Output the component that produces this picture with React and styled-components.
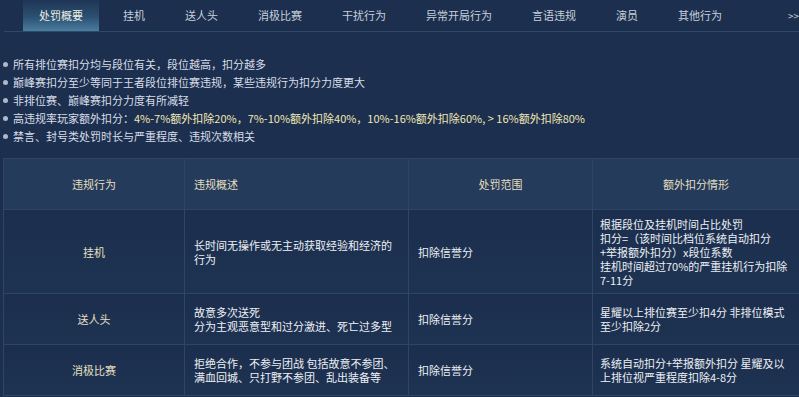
import React from 'react';
import styled, { createGlobalStyle } from 'styled-components';

const GlobalStyle = createGlobalStyle`
  html, body {
    margin: 0;
    padding: 0;
    background: #1c2f4e;
    font-family: "Noto Sans CJK SC", "Noto Sans", sans-serif;
  }
`;

const tabs = ['处罚概要', '挂机', '送人头', '消极比赛', '干扰行为', '异常开局行为', '言语违规', '演员', '其他行为'];

const notes = [
  { text: '所有排位赛扣分均与段位有关，段位越高，扣分越多' },
  { text: '巅峰赛扣分至少等同于王者段位排位赛违规，某些违规行为扣分力度更大' },
  { text: '非排位赛、巅峰赛扣分力度有所减轻' },
  {
    text: '高违规率玩家额外扣分：',
    mark: '4%-7%额外扣除20%，7%-10%额外扣除40%，10%-16%额外扣除60%, > 16%额外扣除80%'
  },
  { text: '禁言、封号类处罚时长与严重程度、违规次数相关' }
];

const rows = [
  {
    name: '挂机',
    desc: ['长时间无操作或无主动获取经验和经济的', '行为'],
    scope: '扣除信誉分',
    extra: ['根据段位及挂机时间占比处罚', '扣分=（该时间比档位系统自动扣分', '+举报额外扣分）x段位系数', '挂机时间超过70%的严重挂机行为扣除', '7-11分'],
    height: 84
  },
  {
    name: '送人头',
    desc: ['故意多次送死', '分为主观恶意型和过分激进、死亡过多型'],
    scope: '扣除信誉分',
    extra: ['星耀以上排位赛至少扣4分 非排位模式', '至少扣除2分'],
    height: 51
  },
  {
    name: '消极比赛',
    desc: ['拒绝合作，不参与团战 包括故意不参团、', '满血回城、只打野不参团、乱出装备等'],
    scope: '扣除信誉分',
    extra: ['系统自动扣分+举报额外扣分 星耀及以', '上排位视严重程度扣除4-8分'],
    height: 51
  }
];

function App() {
  return (
    <Page>
      <GlobalStyle />
      <TabBar>
        {tabs.map((t, i) => (
          <Tab key={t} $active={i === 0}>{t}</Tab>
        ))}
        <More>&gt;&gt;</More>
      </TabBar>

      <NoteList>
        {notes.map((n) => (
          <Note key={n.text}>
            {n.text}
            {n.mark && <Mark>{n.mark}</Mark>}
          </Note>
        ))}
      </NoteList>

      <Table>
        <colgroup>
          <col style={{ width: 181 }} />
          <col style={{ width: 224 }} />
          <col style={{ width: 184 }} />
          <col style={{ width: 207 }} />
        </colgroup>
        <thead>
          <tr>
            <Th $align="center">违规行为</Th>
            <Th>违规概述</Th>
            <Th $align="center">处罚范围</Th>
            <Th $align="center">额外扣分情形</Th>
          </tr>
        </thead>
        <tbody>
          {rows.map((r) => (
            <Row key={r.name} $h={r.height}>
              <NameCell>{r.name}</NameCell>
              <Td>{r.desc.map((l) => <Line key={l}>{l}</Line>)}</Td>
              <Td>{r.scope}</Td>
              <Td $pad={7}>{r.extra.map((l) => <Line key={l}>{l}</Line>)}</Td>
            </Row>
          ))}
        </tbody>
      </Table>
    </Page>
  );
}

export default App;

const Page = styled.div`
  width: 799px;
  height: 397px;
  overflow: hidden;
  background: #1c2f4e;
`;

const TabBar = styled.div`
  display: flex;
  align-items: stretch;
  gap: 8px;
  height: 31px;
  margin-left: 4px;
  padding-left: 19px;
  border-bottom: 1px solid #2e4868;
`;

const Tab = styled.div`
  padding: 0 16px;
  line-height: 31px;
  font-size: 11px;
  white-space: nowrap;
  color: ${(p) => (p.$active ? '#eef0e2' : '#c6cfdc')};
  background: ${(p) => (p.$active ? 'linear-gradient(180deg, #1f3556 0%, #2c5072 55%, #4a7d9f 100%)' : 'transparent')};
`;

const More = styled.div`
  margin-left: auto;
  line-height: 31px;
  font-size: 10px;
  color: #c6cfdc;
`;

const NoteList = styled.ul`
  list-style: none;
  margin: 23px 0 0 0;
  padding: 0;
`;

const Note = styled.li`
  position: relative;
  padding-left: 13px;
  font-size: 11px;
  line-height: 18px;
  color: #d8dee8;
  white-space: nowrap;

  &::before {
    content: '';
    position: absolute;
    left: 3px;
    top: 7px;
    width: 5px;
    height: 5px;
    border-radius: 50%;
    background: #aeb8c9;
  }
`;

const Mark = styled.span`
  color: #f2e8b4;
`;

const Table = styled.table`
  margin: 13px 0 0 3px;
  width: 796px;
  border-collapse: collapse;
  table-layout: fixed;
  font-size: 11px;
`;

const Th = styled.th`
  height: 50px;
  padding: 0 9px;
  font-weight: normal;
  text-align: ${(p) => p.$align || 'left'};
  color: #e4dfbf;
  background: #243b5c;
  border: 1px solid #2d4567;
`;

const Row = styled.tr`
  height: ${(p) => p.$h}px;
  background: linear-gradient(180deg, #1b2e4d 0%, #1e3252 100%);
`;

const Td = styled.td`
  padding: 0 ${(p) => p.$pad || 9}px;
  vertical-align: middle;
  color: #edf0f4;
  line-height: 14px;
  white-space: nowrap;
  border: 1px solid #2d4567;
`;

const NameCell = styled(Td)`
  text-align: center;
  color: #e6e0c2;
`;

const Line = styled.div``;
